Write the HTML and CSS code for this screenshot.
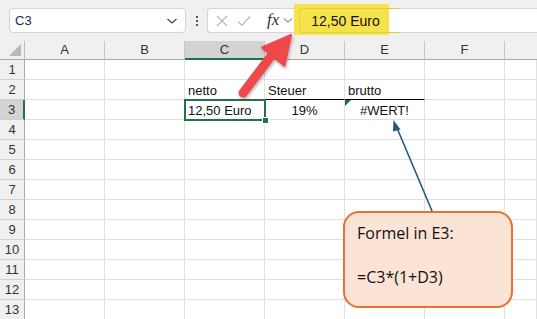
FILE: index.html
```html
<!DOCTYPE html>
<html lang="de">
<head>
<meta charset="utf-8">
<title>Excel #WERT!</title>
<link rel="stylesheet" href="styles.css">
</head>
<body>
<div class="app">
  <div class="toolbar">
    <div class="namebox">
      <span class="ref">C3</span>
      <svg class="chev" width="12" height="8" viewBox="0 0 12 8"><path d="M1.5 2 L6 6 L10.5 2" fill="none" stroke="#444" stroke-width="1.2"/></svg>
    </div>
    <div class="dots"><i></i><i></i><i></i></div>
    <div class="fbar">
      <svg class="ico" width="14" height="14" viewBox="0 0 14 14"><path d="M2 2 L12 12 M12 2 L2 12" stroke="#b9b9b9" stroke-width="1.2" fill="none"/></svg>
      <svg class="ico" width="14" height="14" viewBox="0 0 14 14"><path d="M1 7.5 L5 11.5 L13 2.5" stroke="#b9b9b9" stroke-width="1.2" fill="none"/></svg>
      <span class="fx">fx</span>
      <svg class="chev2" width="10" height="7" viewBox="0 0 10 7"><path d="M1 1.5 L5 5 L9 1.5" fill="none" stroke="#999" stroke-width="1.1"/></svg>
      <div class="input"><span class="hl"></span><span class="val">12,50 Euro</span></div>
    </div>
  </div>

  <div class="sheet">
    <div class="corner"><span class="tri"></span></div>
    <div class="ch">A</div><div class="ch">B</div><div class="ch sel">C</div><div class="ch">D</div><div class="ch">E</div><div class="ch">F</div><div class="ch last"></div>

    <div class="rh">1</div><div class="c"></div><div class="c"></div><div class="c"></div><div class="c"></div><div class="c"></div><div class="c"></div><div class="c"></div>
    <div class="rh">2</div><div class="c"></div><div class="c"></div><div class="c ul">netto</div><div class="c ul">Steuer</div><div class="c ul">brutto</div><div class="c"></div><div class="c"></div>
    <div class="rh sel">3</div><div class="c"></div><div class="c"></div><div class="c active">12,50 Euro<span class="selbox"><span class="handle"></span></span></div><div class="c ctr">19%</div><div class="c ctr err">#WERT!</div><div class="c"></div><div class="c"></div>
    <div class="rh">4</div><div class="c"></div><div class="c"></div><div class="c"></div><div class="c"></div><div class="c"></div><div class="c"></div><div class="c"></div>
    <div class="rh">5</div><div class="c"></div><div class="c"></div><div class="c"></div><div class="c"></div><div class="c"></div><div class="c"></div><div class="c"></div>
    <div class="rh">6</div><div class="c"></div><div class="c"></div><div class="c"></div><div class="c"></div><div class="c"></div><div class="c"></div><div class="c"></div>
    <div class="rh">7</div><div class="c"></div><div class="c"></div><div class="c"></div><div class="c"></div><div class="c"></div><div class="c"></div><div class="c"></div>
    <div class="rh">8</div><div class="c"></div><div class="c"></div><div class="c"></div><div class="c"></div><div class="c"></div><div class="c"></div><div class="c"></div>
    <div class="rh">9</div><div class="c"></div><div class="c"></div><div class="c"></div><div class="c"></div><div class="c"></div><div class="c"></div><div class="c"></div>
    <div class="rh">10</div><div class="c"></div><div class="c"></div><div class="c"></div><div class="c"></div><div class="c"></div><div class="c"></div><div class="c"></div>
    <div class="rh">11</div><div class="c"></div><div class="c"></div><div class="c"></div><div class="c"></div><div class="c"></div><div class="c"></div><div class="c"></div>
    <div class="rh">12</div><div class="c"></div><div class="c"></div><div class="c"></div><div class="c"></div><div class="c"></div><div class="c"></div><div class="c"></div>
    <div class="rh">13</div><div class="c"></div><div class="c"></div><div class="c"></div><div class="c"></div><div class="c"></div><div class="c"></div><div class="c"></div>
  </div>

  <svg class="overlay" width="537" height="319" viewBox="0 0 537 319">
    <g class="redarrow">
      <line x1="243" y1="93" x2="271" y2="56" stroke="#f0474b" stroke-width="9" stroke-linecap="round"/>
      <polygon points="291,35 284.4,65.8 262,47.4" fill="#f0474b" stroke="#f0474b" stroke-width="2" stroke-linejoin="round"/>
    </g>
    <line x1="432" y1="211" x2="397" y2="128" stroke="#1f5c7a" stroke-width="1.6"/>
    <polygon points="393.5,120 400.5,129.5 393,131.5" fill="#1f5c7a"/>
  </svg>

  <div class="callout">
    <p>Formel in E3:</p>
    <p>&nbsp;</p>
    <p>=C3*(1+D3)</p>
  </div>
</div>
</body>
</html>
```

FILE: styles.css
```css
* { box-sizing: border-box; }
html, body { margin: 0; padding: 0; }
body {
  width: 537px;
  height: 319px;
  overflow: hidden;
  background: #f0f0f0;
  font-family: "Liberation Sans", Arial, sans-serif;
  color: #222;
}
.app { position: relative; width: 537px; height: 319px; }

/* toolbar */
.toolbar {
  height: 41px;
  display: flex;
  align-items: flex-start;
  padding-top: 8px;
  background: #f0f0f0;
}
.namebox {
  margin-left: 9px;
  width: 177px;
  height: 25px;
  background: #fff;
  border: 1px solid #d4d4d4;
  border-radius: 4px;
  display: flex;
  align-items: center;
  justify-content: space-between;
  padding: 0 7px 0 5px;
  font-size: 13px;
}
.ref { color: #1d2a4a; }
.dots {
  width: 21px;
  height: 25px;
  display: flex;
  flex-direction: column;
  align-items: center;
  justify-content: center;
  gap: 2px;
}
.dots i { display: block; width: 2px; height: 2px; background: #555; }
.fbar {
  flex: 1;
  height: 25px;
  background: #fff;
  border: 1px solid #d4d4d4;
  border-right: none;
  border-radius: 4px 0 0 4px;
  display: flex;
  align-items: center;
  padding-left: 7px;
}
.ico { margin-right: 8px; }
.ico + .ico { margin-right: 14px; }
.fx {
  font-family: "Liberation Serif", "Times New Roman", serif;
  font-style: italic;
  font-size: 17px;
  color: #333;
  margin-left: 2px;
  margin-top: -2px;
}
.chev2 { margin-left: 4px; }
.input {
  position: relative;
  flex: 1;
  height: 25px;
  margin-left: 4px;
  display: flex;
  align-items: center;
  padding-left: 14px;
  font-size: 14px;
  color: #111;
}
.hl {
  position: absolute;
  left: -3px;
  top: -4px;
  width: 95px;
  height: 31px;
  background: #f6e24a;
}
.hl::after {
  content: "";
  position: absolute;
  left: 5px;
  top: 4px;
  width: 100px;
  height: 23px;
  border: 1px solid #e3cf3e;
  border-right: none;
  border-radius: 4px 0 0 4px;
}
.val { position: relative; }

/* sheet */
.sheet {
  display: grid;
  grid-template-columns: 25px repeat(6, 80px) 1fr;
  grid-template-rows: 19px repeat(13, 20px);
  font-size: 13px;
}
.corner {
  position: relative;
  background: #f0f0f0;
  border-right: 1px solid #bdbdbd;
  border-bottom: 1px solid #a6a6a6;
}
.tri {
  position: absolute;
  right: 3px;
  bottom: 3px;
  width: 0;
  height: 0;
  border-left: 12px solid transparent;
  border-bottom: 12px solid #b8b8b8;
}
.ch {
  background: #f0f0f0;
  border-right: 1px solid #c6c6c6;
  border-bottom: 1px solid #a6a6a6;
  text-align: center;
  line-height: 18px;
  color: #333;
}
.ch.last { border-right: none; }
.ch.sel {
  background: #d3d3d3;
  border-bottom: 2px solid #217346;
}
.rh {
  background: #f0f0f0;
  border-right: 1px solid #a9a9a9;
  border-bottom: 1px solid #d0d0d0;
  text-align: center;
  line-height: 20px;
  color: #333;
}
.rh.sel {
  background: #d3d3d3;
  border-right: 2px solid #217346;
}
.c {
  position: relative;
  background: #fff;
  border-right: 1px solid #e1e1e1;
  border-bottom: 1px solid #e1e1e1;
  padding-left: 3px;
  line-height: 21px;
  white-space: nowrap;
  color: #111;
}
.c.active { z-index: 2; }
.c.ul { border-bottom-color: #000; }
.c.ctr { text-align: center; padding-left: 0; }
.err::before {
  content: "";
  position: absolute;
  left: 0;
  top: 0;
  border-top: 6px solid #1e7145;
  border-right: 6px solid transparent;
}
.selbox {
  position: absolute;
  left: -1px;
  top: -1px;
  width: 82px;
  height: 22px;
  border: 2px solid #217346;
}
.handle {
  position: absolute;
  right: -5px;
  bottom: -5px;
  width: 7px;
  height: 7px;
  background: #217346;
  border: 1px solid #fff;
}

/* overlay */
.overlay {
  position: absolute;
  left: 0;
  top: 0;
  z-index: 5;
  pointer-events: none;
}
.redarrow { filter: drop-shadow(1px 2px 1.5px rgba(0,0,0,0.3)); }

.callout {
  position: absolute;
  left: 343px;
  top: 211px;
  z-index: 6;
  width: 170px;
  height: 97px;
  background: #fbe3d6;
  border: 2px solid #e97132;
  border-radius: 16px;
  padding: 9px 12px;
  font-family: "Open Sans", "Liberation Sans", sans-serif;
  font-size: 16px;
  color: #111;
}
.callout p { margin: 0; line-height: 22px; }
```
